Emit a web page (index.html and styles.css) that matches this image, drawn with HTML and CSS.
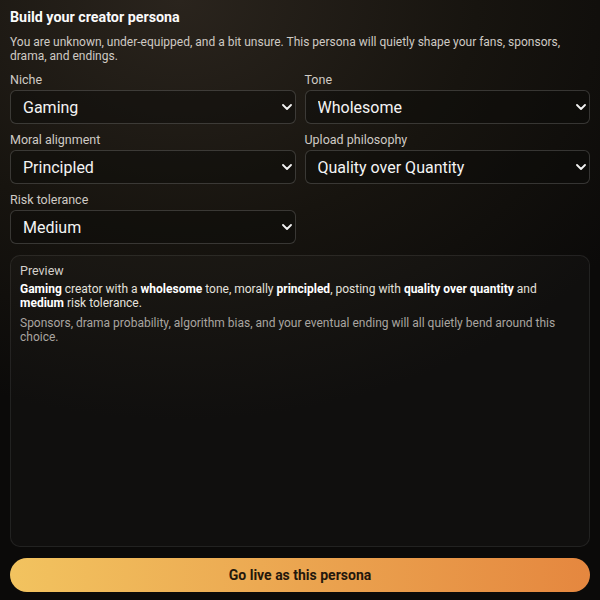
FILE: index.html
```html
<!DOCTYPE html>
<html>
<head>
<meta charset="utf-8">
<link rel="stylesheet" href="styles.css">
</head>
<body>
<div class="page">
  <h1 class="title">Build your creator persona</h1>
  <p class="intro">You are unknown, under-equipped, and a bit unsure. This persona will quietly shape your fans, sponsors, drama, and endings.</p>
  <div class="grid">
    <div class="field">
      <label class="label">Niche</label>
      <div class="select-wrap">
        <select class="select"><option>Gaming</option></select>
        <svg class="chev" viewBox="0 0 10 6" width="10" height="6"><path d="M1 1l4 4 4-4" fill="none" stroke="#f2f2f2" stroke-width="1.8" stroke-linecap="round" stroke-linejoin="round"/></svg>
      </div>
    </div>
    <div class="field">
      <label class="label">Tone</label>
      <div class="select-wrap">
        <select class="select"><option>Wholesome</option></select>
        <svg class="chev" viewBox="0 0 10 6" width="10" height="6"><path d="M1 1l4 4 4-4" fill="none" stroke="#f2f2f2" stroke-width="1.8" stroke-linecap="round" stroke-linejoin="round"/></svg>
      </div>
    </div>
    <div class="field">
      <label class="label">Moral alignment</label>
      <div class="select-wrap">
        <select class="select"><option>Principled</option></select>
        <svg class="chev" viewBox="0 0 10 6" width="10" height="6"><path d="M1 1l4 4 4-4" fill="none" stroke="#f2f2f2" stroke-width="1.8" stroke-linecap="round" stroke-linejoin="round"/></svg>
      </div>
    </div>
    <div class="field">
      <label class="label">Upload philosophy</label>
      <div class="select-wrap">
        <select class="select"><option>Quality over Quantity</option></select>
        <svg class="chev" viewBox="0 0 10 6" width="10" height="6"><path d="M1 1l4 4 4-4" fill="none" stroke="#f2f2f2" stroke-width="1.8" stroke-linecap="round" stroke-linejoin="round"/></svg>
      </div>
    </div>
    <div class="field">
      <label class="label">Risk tolerance</label>
      <div class="select-wrap">
        <select class="select"><option>Medium</option></select>
        <svg class="chev" viewBox="0 0 10 6" width="10" height="6"><path d="M1 1l4 4 4-4" fill="none" stroke="#f2f2f2" stroke-width="1.8" stroke-linecap="round" stroke-linejoin="round"/></svg>
      </div>
    </div>
  </div>
  <div class="preview">
    <div class="preview-label">Preview</div>
    <p class="preview-main"><b>Gaming</b> creator with a <b>wholesome</b> tone, morally <b>principled</b>, posting with <b>quality over quantity</b> and <b>medium</b> risk tolerance.</p>
    <p class="preview-note">Sponsors, drama probability, algorithm bias, and your eventual ending will all quietly bend around this choice.</p>
  </div>
  <button class="cta">Go live as this persona</button>
</div>
</body>
</html>
```
FILE: styles.css
```css
html, body {
  margin: 0;
  height: 100%;
}
body {
  font-family: Roboto, "Liberation Sans", sans-serif;
  color: #f2f2f2;
  background: radial-gradient(ellipse 90% 70% at 30% 0%, #2a241d 0%, #17140f 55%, #0b0a09 100%);
  background-color: #0b0a09;
}
.page {
  box-sizing: border-box;
  height: 600px;
  padding: 8px 10px 8px 10px;
  display: flex;
  flex-direction: column;
}
.title {
  margin: 0;
  font-size: 14.3px;
  line-height: 18px;
  font-weight: 700;
  color: #fafafa;
}
.intro {
  margin: 9px 0 0 0;
  font-size: 12px;
  line-height: 14px;
  color: #cfcac4;
}
.grid {
  margin-top: 9px;
  display: grid;
  grid-template-columns: 1fr 1fr;
  column-gap: 9px;
  row-gap: 8px;
}
.field {
  display: flex;
  flex-direction: column;
  gap: 2px;
}
.label {
  font-size: 12.5px;
  line-height: 16px;
  color: #cfcac4;
}
.select-wrap {
  position: relative;
}
.select {
  width: 100%;
  height: 34px;
  box-sizing: border-box;
  appearance: none;
  -webkit-appearance: none;
  background: rgba(12, 10, 8, 0.45);
  border: 1px solid rgba(255, 255, 255, 0.17);
  border-radius: 6px;
  color: #f4f4f4;
  font-family: Roboto, "Liberation Sans", sans-serif;
  font-size: 16px;
  padding: 0 30px 0 12px;
  outline: none;
}
.chev {
  position: absolute;
  right: 4px;
  top: 14px;
  pointer-events: none;
}
.preview {
  margin-top: 11px;
  flex: 1;
  box-sizing: border-box;
  border: 1px solid rgba(255, 255, 255, 0.08);
  border-radius: 10px;
  background: rgba(255, 255, 255, 0.025);
  padding: 7px 9px;
}
.preview-label {
  font-size: 12.5px;
  line-height: 15px;
  color: #d4d0cb;
}
.preview-main {
  margin: 4px 0 0 0;
  font-size: 12px;
  line-height: 14px;
  color: #e4e1dd;
}
.preview-main b {
  color: #ffffff;
  font-weight: 700;
}
.preview-note {
  margin: 6px 0 0 0;
  font-size: 12px;
  line-height: 14px;
  color: #a9a5a0;
}
.cta {
  margin-top: 11px;
  height: 34px;
  width: 100%;
  border: none;
  border-radius: 17px;
  background: linear-gradient(90deg, #f2c35f 0%, #eba550 50%, #e5873f 100%);
  color: #24170c;
  font-family: Roboto, "Liberation Sans", sans-serif;
  font-size: 14px;
  font-weight: 700;
}
```
